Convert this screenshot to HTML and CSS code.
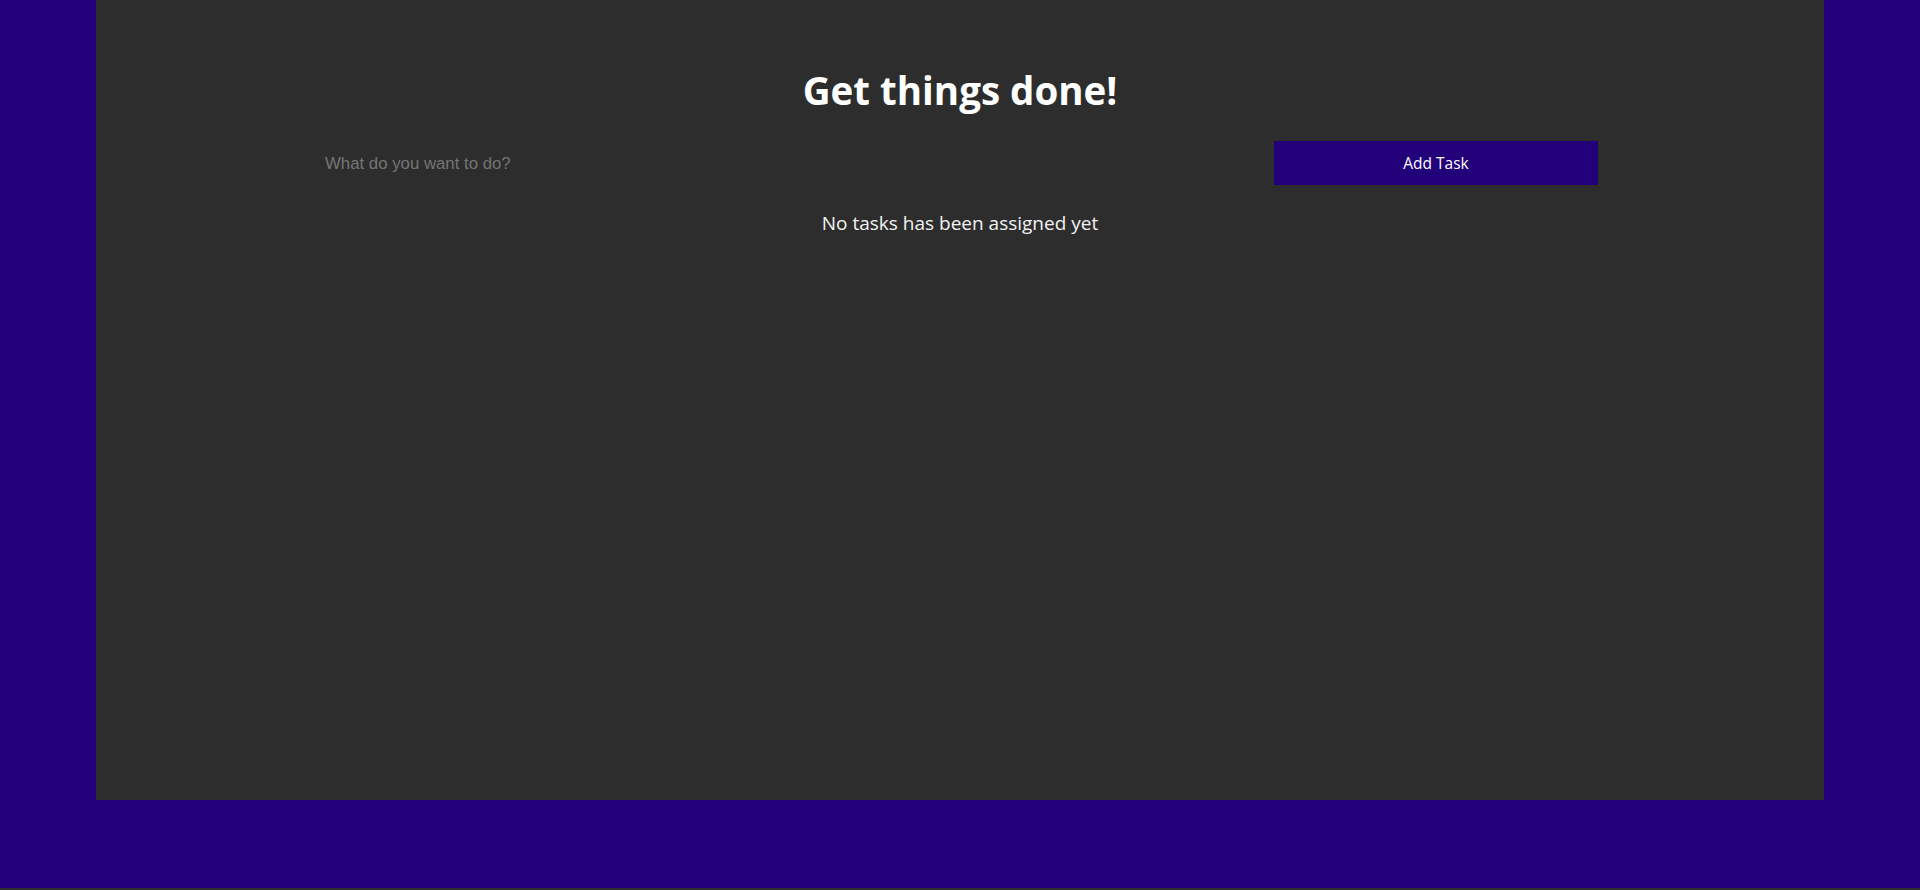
FILE: index.html
```html
<!DOCTYPE html>
<html lang="en">
<head>
<meta charset="utf-8">
<title>Todo</title>
<link rel="stylesheet" href="styles.css">
</head>
<body>
<main class="card">
  <h1 class="title">Get things done!</h1>
  <form class="task-form">
    <input class="task-input" type="text" placeholder="What do you want to do?">
    <button class="task-button" type="button">Add Task</button>
  </form>
  <p class="empty">No tasks has been assigned yet</p>
</main>
</body>
</html>
```

FILE: styles.css
```css
html {
  background: #2d2d2d;
}
body {
  margin: 0;
  min-height: calc(100vh - 2px);
  background: #21007a;
  font-family: "Open Sans", "Noto Sans", sans-serif;
}
.card {
  box-sizing: border-box;
  width: 90%;
  height: 800px;
  margin: 0 auto;
  background: #2d2d2d;
  padding-top: 65px;
  display: flex;
  flex-direction: column;
  align-items: center;
}
.title {
  margin: 0;
  color: #ffffff;
  font-size: 38.5px;
  font-weight: 700;
  line-height: 50px;
}
.task-form {
  margin-top: 26px;
  width: 1276px;
  display: flex;
  height: 44px;
}
.task-input {
  flex: 1;
  min-width: 0;
  border: none;
  outline: none;
  background: transparent;
  padding: 2px 3px 0;
  font-family: "Liberation Sans", Arial, sans-serif;
  font-size: 16.8px;
  color: #ffffff;
}
.task-input::placeholder {
  color: #757575;
}
.task-button {
  width: 324px;
  border: none;
  background: #21007a;
  color: #ffffff;
  font-family: "Open Sans", sans-serif;
  font-size: 15.5px;
  cursor: pointer;
}
.empty {
  margin: 25px 0 0;
  color: #f2f2f2;
  font-size: 19px;
  line-height: 26px;
}
```
